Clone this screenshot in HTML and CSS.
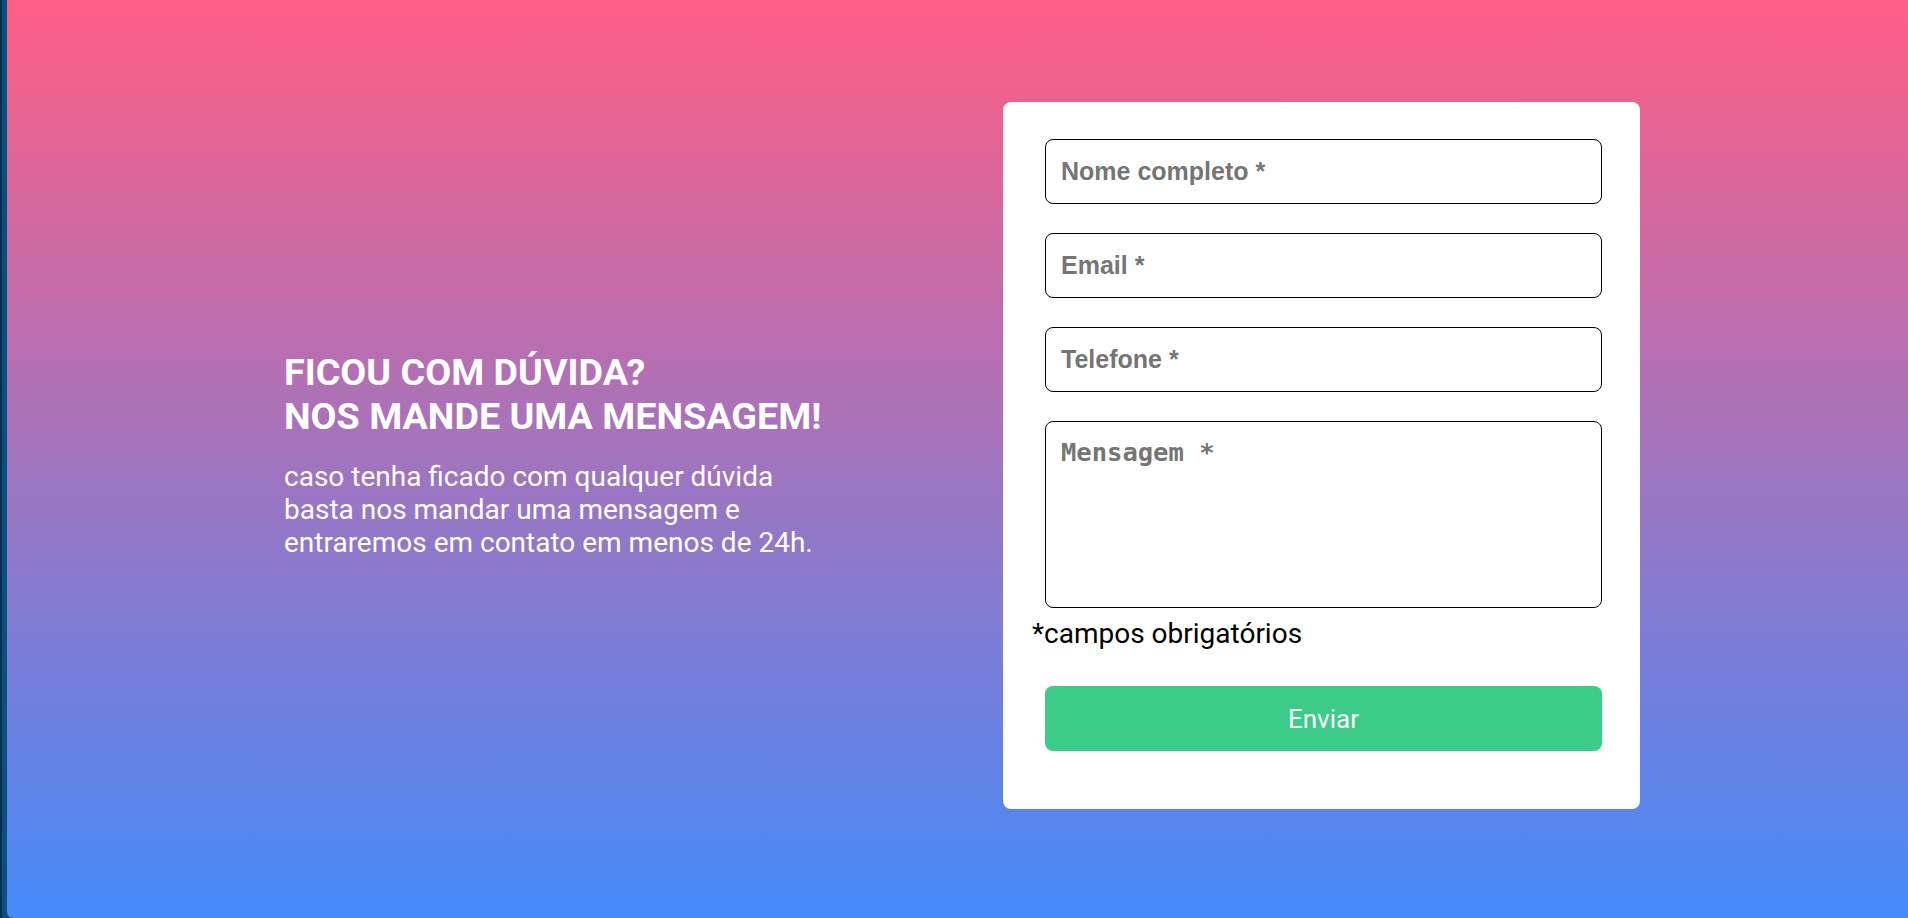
FILE: index.html
```html
<!DOCTYPE html>
<html lang="pt-BR">
<head>
<meta charset="utf-8">
<title>Contato</title>
<link rel="stylesheet" href="styles.css">
</head>
<body>
<main class="contact">
  <section class="intro">
    <h1 class="intro-title">FICOU COM DÚVIDA?<br>NOS MANDE UMA MENSAGEM!</h1>
    <p class="intro-text">caso tenha ficado com qualquer dúvida<br>basta nos mandar uma mensagem e<br>entraremos em contato em menos de 24h.</p>
  </section>
  <form class="card">
    <input class="field" type="text" placeholder="Nome completo *">
    <input class="field" type="email" placeholder="Email *">
    <input class="field" type="tel" placeholder="Telefone *">
    <textarea class="field field-area" placeholder="Mensagem *"></textarea>
    <p class="note">*campos obrigatórios</p>
    <button class="send" type="button">Enviar</button>
  </form>
</main>
</body>
</html>
```

FILE: styles.css
```css
html, body {
  margin: 0;
  padding: 0;
  height: 100%;
}

body {
  background: linear-gradient(to right, #03304f 0, #03304f 2px, #0b4f80 2px, #0b4f80 100%);
  font-family: Roboto, "Noto Sans", sans-serif;
  overflow: hidden;
}

.contact {
  margin-left: 7px;
  height: 918px;
  box-sizing: border-box;
  background: linear-gradient(to bottom, #ff5e84 0%, #448af9 100%);
  border-bottom-left-radius: 6px;
  display: flex;
  align-items: center;
  padding-left: 277px;
  gap: 179px;
}

.intro {
  width: 540px;
  flex: 0 0 540px;
  color: #ffffff;
  margin-bottom: 10px;
}

.intro-title {
  margin: 0 0 22px 0;
  font-size: 37.7px;
  line-height: normal;
  font-weight: 700;
  white-space: nowrap;
}

.intro-text {
  margin: 0;
  font-size: 28px;
  line-height: normal;
  font-weight: 400;
  white-space: nowrap;
}

.card {
  width: 637px;
  flex: 0 0 637px;
  box-sizing: border-box;
  background: #ffffff;
  border-radius: 8px;
  padding: 37px 38px 58px 29px;
  margin-bottom: 7px;
  display: flex;
  flex-direction: column;
}

.field {
  display: block;
  box-sizing: border-box;
  width: 557px;
  height: 65px;
  margin: 0 0 29px 13px;
  padding: 0 15px;
  border: 1px solid #000000;
  border-radius: 8px;
  background: #ffffff;
  font-family: "Liberation Sans", Arial, sans-serif;
  font-size: 25px;
  font-weight: 700;
  color: #222;
  outline: none;
}

.field::placeholder {
  color: #757575;
  opacity: 1;
}

.field-area {
  height: 187px;
  margin-bottom: 0;
  padding: 15px 15px;
  resize: none;
  font-family: "DejaVu Sans Mono", "Liberation Mono", monospace;
  font-size: 25.5px;
}

.note {
  margin: 9px 0 0 0;
  font-size: 28px;
  line-height: 33px;
  color: #000000;
}

.send {
  display: block;
  width: 557px;
  height: 65px;
  margin: 36px 0 0 13px;
  border: none;
  border-radius: 8px;
  background: #3ccb88;
  color: #ffffff;
  font-family: Roboto, sans-serif;
  font-size: 26px;
  cursor: pointer;
}
```
